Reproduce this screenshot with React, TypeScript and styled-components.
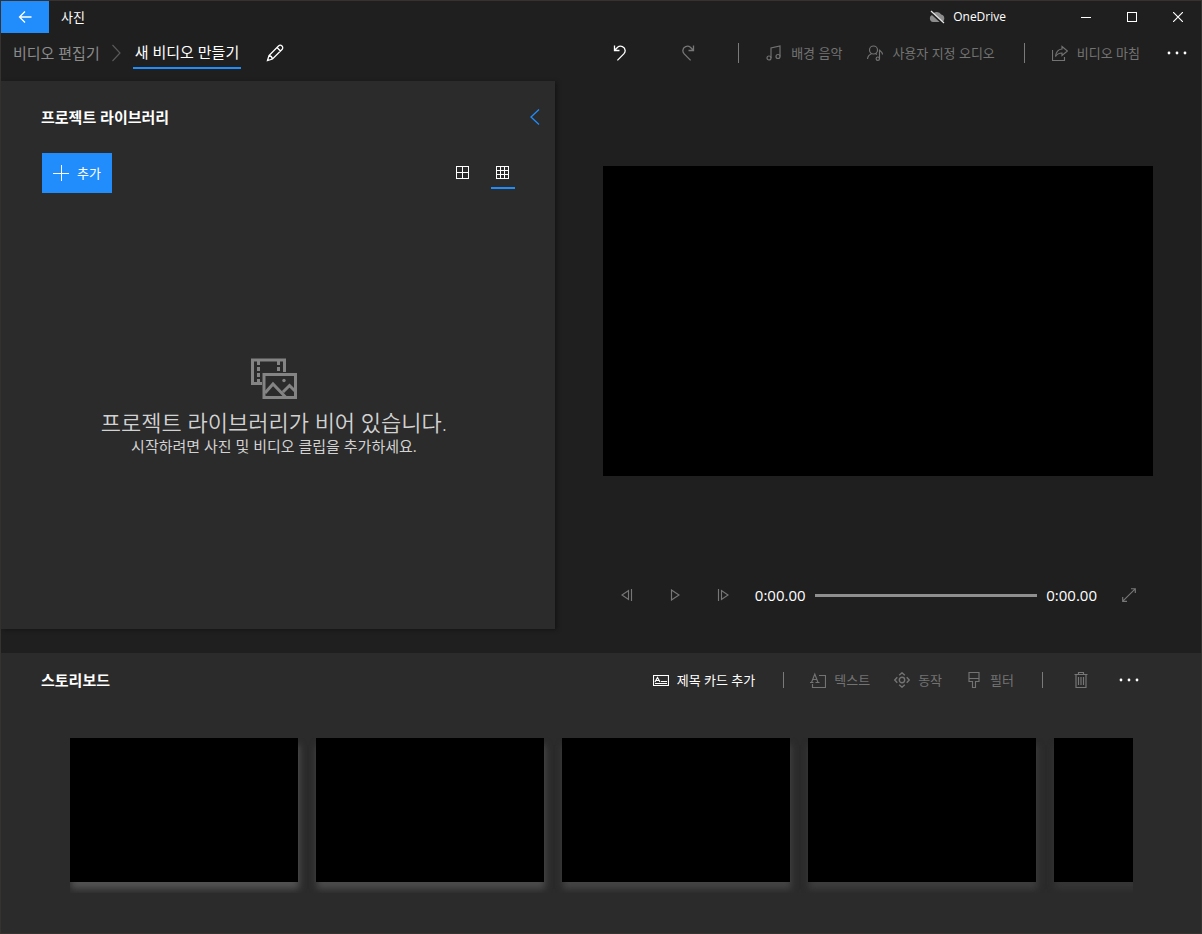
import React from "react";
import styled, { createGlobalStyle, css } from "styled-components";

const GlobalStyle = createGlobalStyle`
  *, *::before, *::after { box-sizing: border-box; }
  body {
    margin: 0;
    background: #1f1f1f;
    color: #fff;
    font-family: "Open Sans", "Noto Sans CJK KR", sans-serif;
    font-size: 13px;
    line-height: 20px;
  }
  button, input { font: inherit; color: inherit; }
  h2, p { margin: 0; }
  svg { display: block; flex: none; }
`;

const Window = styled.div`
  display: flex;
  flex-direction: column;
  min-height: 100vh;
  border: 1px solid #37322f;
  background: #1f1f1f;
`;

const TitleBar = styled.header`
  display: flex;
  align-items: center;
  height: 32px;
`;

const PlainButton = styled.button`
  display: flex;
  align-items: center;
  justify-content: center;
  flex: none;
  padding: 0;
  border: 0;
  background: none;
  cursor: pointer;
`;

const BackButton = styled(PlainButton)`
  width: 48px;
  height: 32px;
  background: #218cfb;
`;

const AppName = styled.span`
  margin-left: 12px;
`;

const AccountButton = styled(PlainButton)`
  gap: 8px;
  margin-left: auto;
  margin-right: 57px;
  font-size: 12px;
`;

const CaptionButton = styled(PlainButton)`
  width: 46px;
  height: 32px;
`;

const CommandBar = styled.div`
  display: flex;
  align-items: center;
  height: 48px;
  padding: 0 0 8px 12px;
`;

const Breadcrumb = styled.nav`
  display: flex;
  align-items: center;
  height: 40px;
  font-size: 15px;
`;

const CrumbLink = styled.a`
  width: 90px;
  color: #8c8c8c;
  text-decoration: none;
  white-space: nowrap;
`;

const CrumbCurrent = styled.a`
  display: flex;
  align-items: center;
  justify-content: center;
  width: 108px;
  height: 32px;
  margin: 0 17px 0 12px;
  border-bottom: 2px solid #218cfb;
  color: #fff;
  text-decoration: none;
  white-space: nowrap;
`;

const Tools = styled.div`
  display: flex;
  align-items: center;
  margin-left: auto;
`;

const ToolButton = styled(PlainButton)<{ $dim?: boolean; $roomy?: boolean }>`
  gap: ${(p) => (p.$roomy ? 9 : 8)}px;
  height: 40px;
  padding: 0 ${(p) => (p.$roomy ? 13 : 12)}px 0 12px;
  color: ${(p) => (p.$dim ? "#737373" : "#fff")};
  white-space: nowrap;
`;

const IconButton = styled(PlainButton)<{ $width?: number; $dim?: boolean }>`
  width: ${(p) => p.$width ?? 48}px;
  height: 40px;
  color: ${(p) => (p.$dim ? "#777" : "#fff")};
`;

const Divider = styled.span<{ $tall?: boolean }>`
  width: 1px;
  height: ${(p) => (p.$tall ? 20 : 16)}px;
  margin: 0 ${(p) => (p.$tall ? 15 : 14)}px 0 16px;
  background: #7a7a7a;
`;

const Main = styled.main`
  display: grid;
  grid-template-columns: minmax(0, 6fr) minmax(0, 7fr);
  flex: 1;
`;

const Library = styled.section`
  display: flex;
  flex-direction: column;
  margin-bottom: 24px;
  padding-top: 12px;
  background: #2b2b2b;
  box-shadow: 2px 1px 4px rgba(0, 0, 0, 0.35);
`;

const LibraryHeader = styled.div`
  display: flex;
  align-items: center;
  justify-content: space-between;
  height: 48px;
  padding-left: 40px;
`;

const Heading = styled.h2`
  font-size: 15px;
  font-weight: 700;
  line-height: 20px;
`;

const LibraryTools = styled.div`
  display: flex;
  align-items: center;
  gap: 16px;
  padding: 12px 40px 0 41px;
`;

const AddButton = styled(PlainButton)`
  gap: 8px;
  width: 70px;
  height: 40px;
  margin-right: auto;
  background: #218cfb;
`;

const ViewButton = styled(PlainButton)<{ $active?: boolean }>`
  width: 24px;
  height: 32px;
  border-bottom: 2px solid transparent;
  ${(p) => p.$active && css`border-bottom-color: #218cfb;`}
`;

const EmptyState = styled.div`
  display: flex;
  flex: 1;
  flex-direction: column;
  align-items: center;
  justify-content: center;
  padding: 0 48px 8px 40px;
  color: #d2d2d2;
  text-align: center;
`;

const EmptyTitle = styled.p`
  margin-top: 8px;
  font-size: 22px;
  font-weight: 350;
  line-height: 28px;
`;

const EmptyText = styled.p`
  font-size: 15px;
  line-height: 20px;
`;

const Preview = styled.section`
  display: flex;
  flex-direction: column;
  padding: 0 48px 34px;
`;

const Stage = styled.div`
  display: flex;
  flex: 1;
  align-items: center;
`;

const Screen = styled.div`
  width: 100%;
  aspect-ratio: 550 / 310;
  background: #000;
`;

const Player = styled.div`
  display: flex;
  align-items: center;
  height: 48px;
  margin-top: 10px;
`;

const Time = styled.span`
  padding: 0 8px;
  font-size: 15px;
`;

const Seek = styled.input`
  flex: 1;
  min-width: 0;
  height: 3px;
  margin: 0 1px;
  appearance: none;
  background: #8f8f8f;
  &::-webkit-slider-thumb {
    appearance: none;
    width: 0;
    height: 0;
  }
`;

const Storyboard = styled.section`
  padding-bottom: 40px;
  background: #2b2b2b;
`;

const StoryHeader = styled.div`
  display: flex;
  align-items: center;
  height: 54px;
  padding: 0 48px 0 40px;
`;

const Strip = styled.div`
  display: flex;
  gap: 18px;
  margin: 31px 68px 0 69px;
  padding-bottom: 11px;
  overflow: hidden;
`;

const Card = styled.div<{ $glow: string }>`
  flex: none;
  width: 228px;
  height: 144px;
  background: #000;
  box-shadow: 1px 7px 7px ${(p) => p.$glow};
`;

type IconProps = {
  w?: number;
  h?: number;
  stroke?: number;
  crisp?: boolean;
  children: React.ReactNode;
};

const Icon = ({ w = 16, h = 16, stroke = 1.15, crisp, children }: IconProps) => (
  <svg
    width={w}
    height={h}
    viewBox={`0 0 ${w} ${h}`}
    fill="none"
    stroke="currentColor"
    strokeWidth={crisp ? 1 : stroke}
    shapeRendering={crisp ? "crispEdges" : undefined}
    aria-hidden="true"
  >
    {children}
  </svg>
);

const MoreIcon = () => (
  <Icon w={20} h={4}>
    <g fill="currentColor" stroke="none">
      <circle cx="2" cy="2" r="1.4" />
      <circle cx="10" cy="2" r="1.4" />
      <circle cx="18" cy="2" r="1.4" />
    </g>
  </Icon>
);

const UndoIcon = () => (
  <Icon w={14} h={18} stroke={1.3}>
    <path d="M1.500 1.500v5h5M1.700 6.300L4.600 3.200A4.700 4.700 0 0 1 12.200 6.600C12.200 8 11.600 9 10.800 9.900L4.400 16.400" />
  </Icon>
);

const RedoIcon = () => (
  <Icon w={14} h={18} stroke={1.3}>
    <path d="M12.500 1.500v5h-5M12.300 6.300L9.400 3.200A4.700 4.700 0 0 0 1.800 6.600C1.800 8 2.400 9 3.200 9.900L9.600 16.400" />
  </Icon>
);

const EmptyIcon = () => (
  <Icon w={46} h={42} stroke={3}>
    <g stroke="#848484">
      <path d="M11 25.500H1.500V2H33.500V14" />
      <path d="M13 16.500H44.500V39.500H13Z" />
      <path d="M14 35L22 26L34.500 39M32 34L38.500 27.500L44 33" />
    </g>
    <g fill="#848484" stroke="none">
      <path d="M6 3h3v4H6zM6 9h3v4H6zM6 15h3v4H6zM6 21h3v4H6zM26 3h3v4h-3zM26 9h3v4h-3z" />
      <circle cx="33" cy="22.500" r="1.700" />
    </g>
  </Icon>
);

export default function App() {
  return (
    <>
      <GlobalStyle />
      <Window>
        <TitleBar>
          <BackButton aria-label="뒤로">
            <Icon w={14} h={14} stroke={1.3}>
              <path d="M13.500 7H1.500M7 1.500L1.500 7L7 12.500" />
            </Icon>
          </BackButton>
          <AppName>사진</AppName>
          <AccountButton>
            <Icon w={16} h={14}>
              <path
                d="M4 12a3.600 3.600 0 0 1-.6-7 4.800 4.800 0 0 1 8.800-.4A3.800 3.800 0 0 1 12.500 12z"
                fill="#8d8d8d"
                stroke="none"
              />
              <path d="M1.500 2L14 13.500" stroke="#1f1f1f" strokeWidth="2.400" />
              <path d="M2 1L15 13" stroke="#e8e8e8" strokeWidth="1.200" />
            </Icon>
            OneDrive
          </AccountButton>
          <CaptionButton aria-label="최소화">
            <Icon w={10} h={10} crisp><path d="M0 5.500H10" /></Icon>
          </CaptionButton>
          <CaptionButton aria-label="최대화">
            <Icon w={10} h={10} crisp><path d="M.5 .5H9.500V9.500H.5Z" /></Icon>
          </CaptionButton>
          <CaptionButton aria-label="닫기">
            <Icon w={10} h={10}><path d="M0 0L10 10M10 0L0 10" /></Icon>
          </CaptionButton>
        </TitleBar>

        <CommandBar>
          <Breadcrumb>
            <CrumbLink href="#editor">비디오 편집기</CrumbLink>
            <Icon w={18} h={18}>
              <path d="M9.500 1L17 9L9.500 17" stroke="#5a5a5a" />
            </Icon>
            <CrumbCurrent href="#project" aria-current="page">새 비디오 만들기</CrumbCurrent>
          </Breadcrumb>
          <IconButton $width={34} aria-label="이름 바꾸기">
            <Icon w={18} h={18} stroke={1.3}>
              <path d="M1.500 16.500L3 11.500L12.500 2A2.300 2.300 0 0 1 16 5.500L6.500 15ZM11 3.500L14.500 7M3 11.500Q5.800 12 6.500 15" />
            </Icon>
          </IconButton>
          <Tools>
            <IconButton $width={68} aria-label="실행 취소"><UndoIcon /></IconButton>
            <IconButton $width={68} $dim aria-label="다시 실행"><RedoIcon /></IconButton>
            <Divider $tall />
            <ToolButton $dim $roomy>
              <Icon>
                <circle cx="3" cy="13" r="2" />
                <circle cx="12" cy="11.500" r="2" />
                <path d="M5 13V3L14 1V11.500" />
              </Icon>
              배경 음악
            </ToolButton>
            <ToolButton $dim $roomy>
              <Icon>
                <circle cx="6.500" cy="5" r="4" />
                <path d="M.5 14C.8 11 2.500 9.500 4.500 8.700M8.500 8.500L10 9.500M12.500 14V4.500C12.800 6.500 15.500 6.500 15.500 9.500" />
                <circle cx="10.800" cy="13.700" r="1.700" />
              </Icon>
              사용자 지정 오디오
            </ToolButton>
            <Divider $tall />
            <ToolButton $dim $roomy>
              <Icon>
                <path d="M.5 5V15.500H12.500V12M10 1.500L15.500 6L10 10.500V8C7 8 5 9 3.500 11.500C4 7 6 4.300 10 4Z" />
              </Icon>
              비디오 마침
            </ToolButton>
            <IconButton aria-label="더 보기"><MoreIcon /></IconButton>
          </Tools>
        </CommandBar>

        <Main>
          <Library>
            <LibraryHeader>
              <Heading>프로젝트 라이브러리</Heading>
              <IconButton $width={40} aria-label="라이브러리 접기">
                <Icon w={10} h={16} stroke={1.3}>
                  <path d="M9 .5L1 8L9 15.500" stroke="#218cfb" />
                </Icon>
              </IconButton>
            </LibraryHeader>
            <LibraryTools>
              <AddButton>
                <Icon crisp><path d="M8.500 0V16M0 8.500H16" /></Icon>
                추가
              </AddButton>
              <ViewButton aria-label="큰 눈금">
                <Icon w={13} h={13} crisp>
                  <path d="M.5 .5H12.500V12.500H.5ZM6.500 0V13M0 6.500H13" />
                </Icon>
              </ViewButton>
              <ViewButton $active aria-label="작은 눈금" aria-pressed="true">
                <Icon w={13} h={13} crisp>
                  <path d="M.5 .5H12.500V12.500H.5ZM4.500 0V13M8.500 0V13M0 4.500H13M0 8.500H13" />
                </Icon>
              </ViewButton>
            </LibraryTools>
            <EmptyState>
              <EmptyIcon />
              <EmptyTitle>프로젝트 라이브러리가 비어 있습니다.</EmptyTitle>
              <EmptyText>시작하려면 사진 및 비디오 클립을 추가하세요.</EmptyText>
            </EmptyState>
          </Library>

          <Preview>
            <Stage><Screen /></Stage>
            <Player>
              <IconButton $dim aria-label="이전 프레임">
                <Icon w={12} h={12}><path d="M7.500 1.500V10.500L1 6ZM10.500 0V12" /></Icon>
              </IconButton>
              <IconButton $dim aria-label="재생">
                <Icon w={10} h={12}><path d="M1.500 1V11L9 6Z" /></Icon>
              </IconButton>
              <IconButton $dim aria-label="다음 프레임">
                <Icon w={12} h={12}><path d="M4.500 1.500V10.500L11 6ZM1.500 0V12" /></Icon>
              </IconButton>
              <Time>0:00.00</Time>
              <Seek type="range" min={0} max={100} defaultValue={0} aria-label="탐색" />
              <Time>0:00.00</Time>
              <IconButton $dim aria-label="전체 화면">
                <Icon w={14} h={14}>
                  <path d="M.8 13.200L13.200 .8M9 .7H13.300V5M.7 9V13.300H5" />
                </Icon>
              </IconButton>
            </Player>
          </Preview>
        </Main>

        <Storyboard>
          <StoryHeader>
            <Heading>스토리보드</Heading>
            <Tools>
              <ToolButton>
                <Icon>
                  <path d="M.5 3.500H15.500V13.500H.5ZM2 11.500H14M8 9.500H14M2 10L4.500 5.500L7 10M3 8.500H6" />
                </Icon>
                제목 카드 추가
              </ToolButton>
              <Divider />
              <ToolButton $dim>
                <Icon>
                  <path d="M9 3.500H15.500V15.500H2.500V12M0 10.500H3.500M5.500 10.500H9.500M1.500 10.500L4.800 2L8 10.500M2.500 7.500H7" />
                </Icon>
                텍스트
              </ToolButton>
              <ToolButton $dim>
                <Icon stroke={1.4}>
                  <circle cx="8" cy="8" r="2.700" />
                  <path d="M5.200 3.300L8 .8L10.800 3.300M5.200 12.700L8 15.200L10.800 12.700M3.300 5.200L.8 8L3.300 10.800M12.700 5.200L15.200 8L12.700 10.800" />
                </Icon>
                동작
              </ToolButton>
              <ToolButton $dim>
                <Icon>
                  <path d="M3 .5H13V9.500H9.500V15.500H6.500V9.500H3ZM3 6.500H13" />
                </Icon>
                필터
              </ToolButton>
              <Divider />
              <IconButton $dim aria-label="삭제">
                <Icon w={14} h={16}>
                  <path d="M.5 2.500H13.500M4.500 2.500V.5H9.500V2.500M2 2.500V15.500H12V2.500M4.500 5V13M7 5V13M9.500 5V13" />
                </Icon>
              </IconButton>
              <IconButton aria-label="더 보기"><MoreIcon /></IconButton>
            </Tools>
          </StoryHeader>
          <Strip>
            <Card $glow="#535353" />
            <Card $glow="#4c4c4c" />
            <Card $glow="#454545" />
            <Card $glow="#3e3e3e" />
            <Card $glow="#363636" />
          </Strip>
        </Storyboard>
      </Window>
    </>
  );
}
